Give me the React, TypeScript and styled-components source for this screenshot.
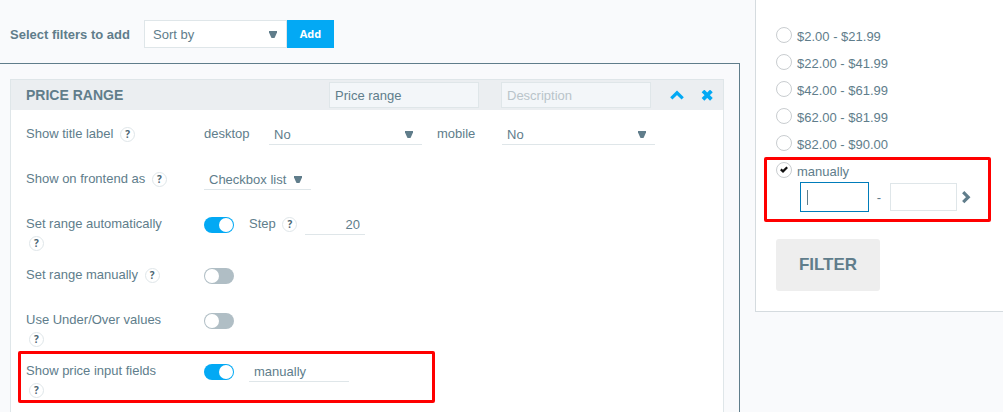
import React from 'react';
import styled, { createGlobalStyle } from 'styled-components';

const ink = '#607d8b';
const line = '#dfe6e9';
const blue = '#03a9f4';

const GlobalStyle = createGlobalStyle`
  *, *::before, *::after { box-sizing: border-box; }
  body {
    margin: 0;
    background: #f9fafc;
    color: ${ink};
    font: 13px/19px "Liberation Sans", Arial, sans-serif;
  }
  button, input, select { font: inherit; color: inherit; margin: 0; }
`;

const Page = styled.div`
  display: grid;
  grid-template-columns: minmax(0, 1fr) 248px;
  gap: 15px;
  align-items: start;
  min-height: 100vh;
`;

const Builder = styled.main`
  display: flex;
  flex-direction: column;
  min-height: 100vh;
`;

const Toolbar = styled.form`
  display: flex;
  align-items: center;
  padding: 20px 10px 15px;
`;

const ToolbarLabel = styled.label`
  width: 134px;
  font-weight: bold;
`;

const AddButton = styled.button`
  width: 47px;
  height: 28px;
  padding: 0;
  border: 0;
  background: ${blue};
  color: #fff;
  font: bold 11px/28px "Open Sans", sans-serif;
`;

const SelectBox = styled.span<{ $width: number; $boxed?: boolean }>`
  display: flex;
  position: relative;
  width: ${p => p.$width}px;
  height: ${p => (p.$boxed ? 28 : 21)}px;
  border: solid ${line};
  border-width: ${p => (p.$boxed ? '1px' : '0 0 1px')};
  background: #fff;
`;

const NativeSelect = styled.select<{ $boxed?: boolean }>`
  appearance: none;
  width: 100%;
  padding: 0 ${p => (p.$boxed ? 8 : 5)}px;
  border: 0;
  background: transparent;
  outline: 0;
`;

const Arrow = styled.svg`
  position: absolute;
  right: 9px;
  top: 50%;
  margin-top: -3px;
  pointer-events: none;
  fill: ${ink};
`;

const Workspace = styled.div`
  flex: 1;
  display: flex;
  padding: 15px 15px 0 10px;
  border: solid ${ink};
  border-width: 1px 1px 0 0;
`;

const Card = styled.section`
  flex: 1;
  min-width: 0;
  border: 1px solid ${line};
  border-bottom: 0;
  background: #fff;
`;

const CardHeader = styled.header`
  display: flex;
  align-items: center;
  height: 30px;
  padding: 0 10px 0 15px;
  background: #ebeef1;
`;

const CardTitle = styled.h2`
  flex: 1;
  margin: 0;
  font-size: 14px;
`;

const HeaderInput = styled.input`
  width: 150px;
  height: 26px;
  margin-right: 22px;
  padding: 0 5px;
  border: 1px solid ${line};
  background: #f3f6f9;
  outline: 0;
  &::placeholder { color: #b9c4ca; opacity: 1; }
  & + & { margin-right: 19px; }
`;

const HeaderActions = styled.div`
  display: flex;
  gap: 17px;
`;

const IconButton = styled.button`
  display: flex;
  padding: 0;
  border: 0;
  background: none;
`;

const Rows = styled.div`
  padding-top: 14px;
`;

const Row = styled.div`
  position: relative;
  display: flex;
  align-items: flex-start;
  min-height: 45px;
  padding: 0 15px 13px;
`;

const RowLabel = styled.div`
  flex: none;
  width: 150px;
  margin-right: 28px;
`;

const RowControls = styled.div`
  display: flex;
  align-items: flex-start;
  gap: 15px;
`;

const Field = styled.div`
  display: flex;
`;

const FieldLabel = styled.label`
  width: 65px;
`;

const StepLabel = styled.span`
  width: 56px;
`;

const HelpButton = styled.button`
  display: inline-block;
  width: 15px;
  height: 15px;
  margin: 3px 3px 0;
  padding: 0;
  border: 1px solid ${line};
  border-radius: 50%;
  background: #fff;
  color: #4c6572;
  font: bold 10px/13px "Open Sans", sans-serif;
  text-align: center;
  vertical-align: top;
`;

const Toggle = styled.input`
  appearance: none;
  flex: none;
  width: 30px;
  height: 16px;
  margin-top: 3px;
  border-radius: 8px;
  background: #b0bec5;
  &::before {
    content: '';
    display: block;
    width: 14px;
    height: 14px;
    margin: 1px;
    border-radius: 50%;
    background: #fff;
  }
  &:checked { background: ${blue}; }
  &:checked::before { margin-left: 15px; }
`;

const LineInput = styled.input<{ $width: number; $right?: boolean }>`
  width: ${p => p.$width}px;
  height: 21px;
  padding: 0 5px;
  border: 0;
  border-bottom: 1px solid ${line};
  background: transparent;
  text-align: ${p => (p.$right ? 'right' : 'left')};
  outline: 0;
`;

const Highlight = styled.div<{ $inset: string; $width?: number }>`
  position: absolute;
  inset: ${p => p.$inset};
  width: ${p => (p.$width ? `${p.$width}px` : 'auto')};
  border: 3px solid #f00;
  border-radius: 2px;
  pointer-events: none;
`;

const Preview = styled.aside`
  padding: 21px 11px 20px 20px;
  border: solid #d5dbdf;
  border-width: 0 0 1px 1px;
  background: #fff;
`;

const Choice = styled.label`
  display: flex;
  align-items: flex-start;
  height: 27px;
  padding-top: 6px;
`;

const ChoiceRadio = styled.input`
  appearance: none;
  width: 16px;
  height: 16px;
  margin: 0;
`;

const ChoiceMark = styled.span`
  position: relative;
  display: flex;
  width: 16px;
  height: 16px;
  margin-right: 5px;
  border: 1px solid #c9cdd0;
  border-radius: 50%;
  background: #fff;
  svg { position: absolute; left: 3px; top: 3px; }
`;

const Manual = styled.div`
  position: relative;
`;

const RangeRow = styled.div`
  display: flex;
  align-items: center;
  padding-left: 25px;
`;

const RangeField = styled.span`
  position: relative;
  display: flex;
`;

const RangeInput = styled.input<{ $active?: boolean }>`
  width: 67px;
  height: 28px;
  padding: 0 6px;
  border: 1px solid ${p => (p.$active ? '#fff' : line)};
  box-shadow: ${p => (p.$active ? '0 0 0 1px #007cba' : 'none')};
  outline: 0;
`;

const Caret = styled.span`
  position: absolute;
  left: 6px;
  top: 7px;
  width: 1px;
  height: 15px;
  background: ${ink};
`;

const Dash = styled.span`
  width: 22px;
  text-align: center;
`;

const FilterButton = styled.button`
  width: 104px;
  height: 52px;
  margin-top: 28px;
  padding: 0;
  border: 0;
  border-radius: 3px;
  background: #eee;
  font-size: 17px;
  font-weight: bold;
  line-height: 52px;
`;

function Select({ id, value, width, boxed }: { id: string; value: string; width: number; boxed?: boolean }) {
  return (
    <SelectBox $width={width} $boxed={boxed}>
      <NativeSelect id={id} $boxed={boxed} defaultValue={value}>
        <option>{value}</option>
      </NativeSelect>
      <Arrow width="8" height="7" viewBox="0 0 8 7"><path d="M0 0h8v1.5L5.5 7h-3L0 1.5z" /></Arrow>
    </SelectBox>
  );
}

const Help = () => <HelpButton type="button" aria-label="Help">?</HelpButton>;

function RangeChoice({ text, checked }: { text: string; checked?: boolean }) {
  return (
    <Choice>
      <ChoiceMark>
        <ChoiceRadio type="radio" name="range" defaultChecked={checked} />
        {checked && (
          <svg width="8" height="7" viewBox="0 0 8 7" fill="none" stroke="#111" strokeWidth="2.2">
            <path d="M.8 3.4 3 5.4 7.2 1.2" />
          </svg>
        )}
      </ChoiceMark>
      {text}
    </Choice>
  );
}

const ranges = ['$2.00 - $21.99', '$22.00 - $41.99', '$42.00 - $61.99', '$62.00 - $81.99', '$82.00 - $90.00'];

export default function App() {
  return (
    <>
      <GlobalStyle />
      <Page>
        <Builder>
          <Toolbar>
            <ToolbarLabel htmlFor="filter">Select filters to add</ToolbarLabel>
            <Select id="filter" value="Sort by" width={143} boxed />
            <AddButton type="button">Add</AddButton>
          </Toolbar>
          <Workspace>
            <Card>
              <CardHeader>
                <CardTitle>PRICE RANGE</CardTitle>
                <HeaderInput aria-label="Title" defaultValue="Price range" />
                <HeaderInput aria-label="Description" placeholder="Description" />
                <HeaderActions>
                  <IconButton type="button" aria-label="Collapse">
                    <svg width="14" height="11" viewBox="0 0 14 11" fill="none" stroke={blue} strokeWidth="3.2">
                      <path d="M1.3 8.4 7 2.8l5.7 5.6" />
                    </svg>
                  </IconButton>
                  <IconButton type="button" aria-label="Remove">
                    <svg width="12" height="11" viewBox="0 0 12 11" fill="none" stroke={blue} strokeWidth="3.8">
                      <path d="M2 1l8.4 8.4M10.4 1 2 9.4" />
                    </svg>
                  </IconButton>
                </HeaderActions>
              </CardHeader>
              <Rows>
                <Row>
                  <RowLabel>Show title label <Help /></RowLabel>
                  <RowControls>
                    <Field>
                      <FieldLabel htmlFor="desktop">desktop</FieldLabel>
                      <Select id="desktop" value="No" width={153} />
                    </Field>
                    <Field>
                      <FieldLabel htmlFor="mobile">mobile</FieldLabel>
                      <Select id="mobile" value="No" width={153} />
                    </Field>
                  </RowControls>
                </Row>
                <Row>
                  <RowLabel><label htmlFor="view">Show on frontend as</label> <Help /></RowLabel>
                  <Select id="view" value="Checkbox list" width={107} />
                </Row>
                <Row>
                  <RowLabel><label htmlFor="auto">Set range automatically</label> <Help /></RowLabel>
                  <RowControls>
                    <Toggle id="auto" type="checkbox" defaultChecked />
                    <Field>
                      <StepLabel><label htmlFor="step">Step</label> <Help /></StepLabel>
                      <LineInput id="step" defaultValue="20" $width={60} $right />
                    </Field>
                  </RowControls>
                </Row>
                <Row>
                  <RowLabel><label htmlFor="manual">Set range manually</label> <Help /></RowLabel>
                  <Toggle id="manual" type="checkbox" />
                </Row>
                <Row>
                  <RowLabel><label htmlFor="under">Use Under/Over values</label> <Help /></RowLabel>
                  <Toggle id="under" type="checkbox" />
                </Row>
                <Row>
                  <RowLabel><label htmlFor="fields">Show price input fields</label> <Help /></RowLabel>
                  <RowControls>
                    <Toggle id="fields" type="checkbox" defaultChecked />
                    <LineInput aria-label="Input fields label" defaultValue="manually" $width={100} />
                  </RowControls>
                  <Highlight $inset="-10px auto 9px 7px" $width={417} />
                </Row>
              </Rows>
            </Card>
          </Workspace>
        </Builder>
        <Preview>
          {ranges.map(r => <RangeChoice key={r} text={r} />)}
          <Manual>
            <RangeChoice text="manually" checked />
            <RangeRow>
              <RangeField>
                <RangeInput aria-label="Minimum price" $active />
                <Caret />
              </RangeField>
              <Dash>-</Dash>
              <RangeInput aria-label="Maximum price" />
              <IconButton type="button" aria-label="Apply range">
                <svg width="14" height="14" viewBox="0 0 14 14" fill="none" stroke={ink} strokeWidth="3.2">
                  <path d="M6.2 2.2 11.2 7.2 6.2 12.2" />
                </svg>
              </IconButton>
            </RangeRow>
            <Highlight $inset="1px 1px -11px -12px" />
          </Manual>
          <FilterButton type="button">FILTER</FilterButton>
        </Preview>
      </Page>
    </>
  );
}
